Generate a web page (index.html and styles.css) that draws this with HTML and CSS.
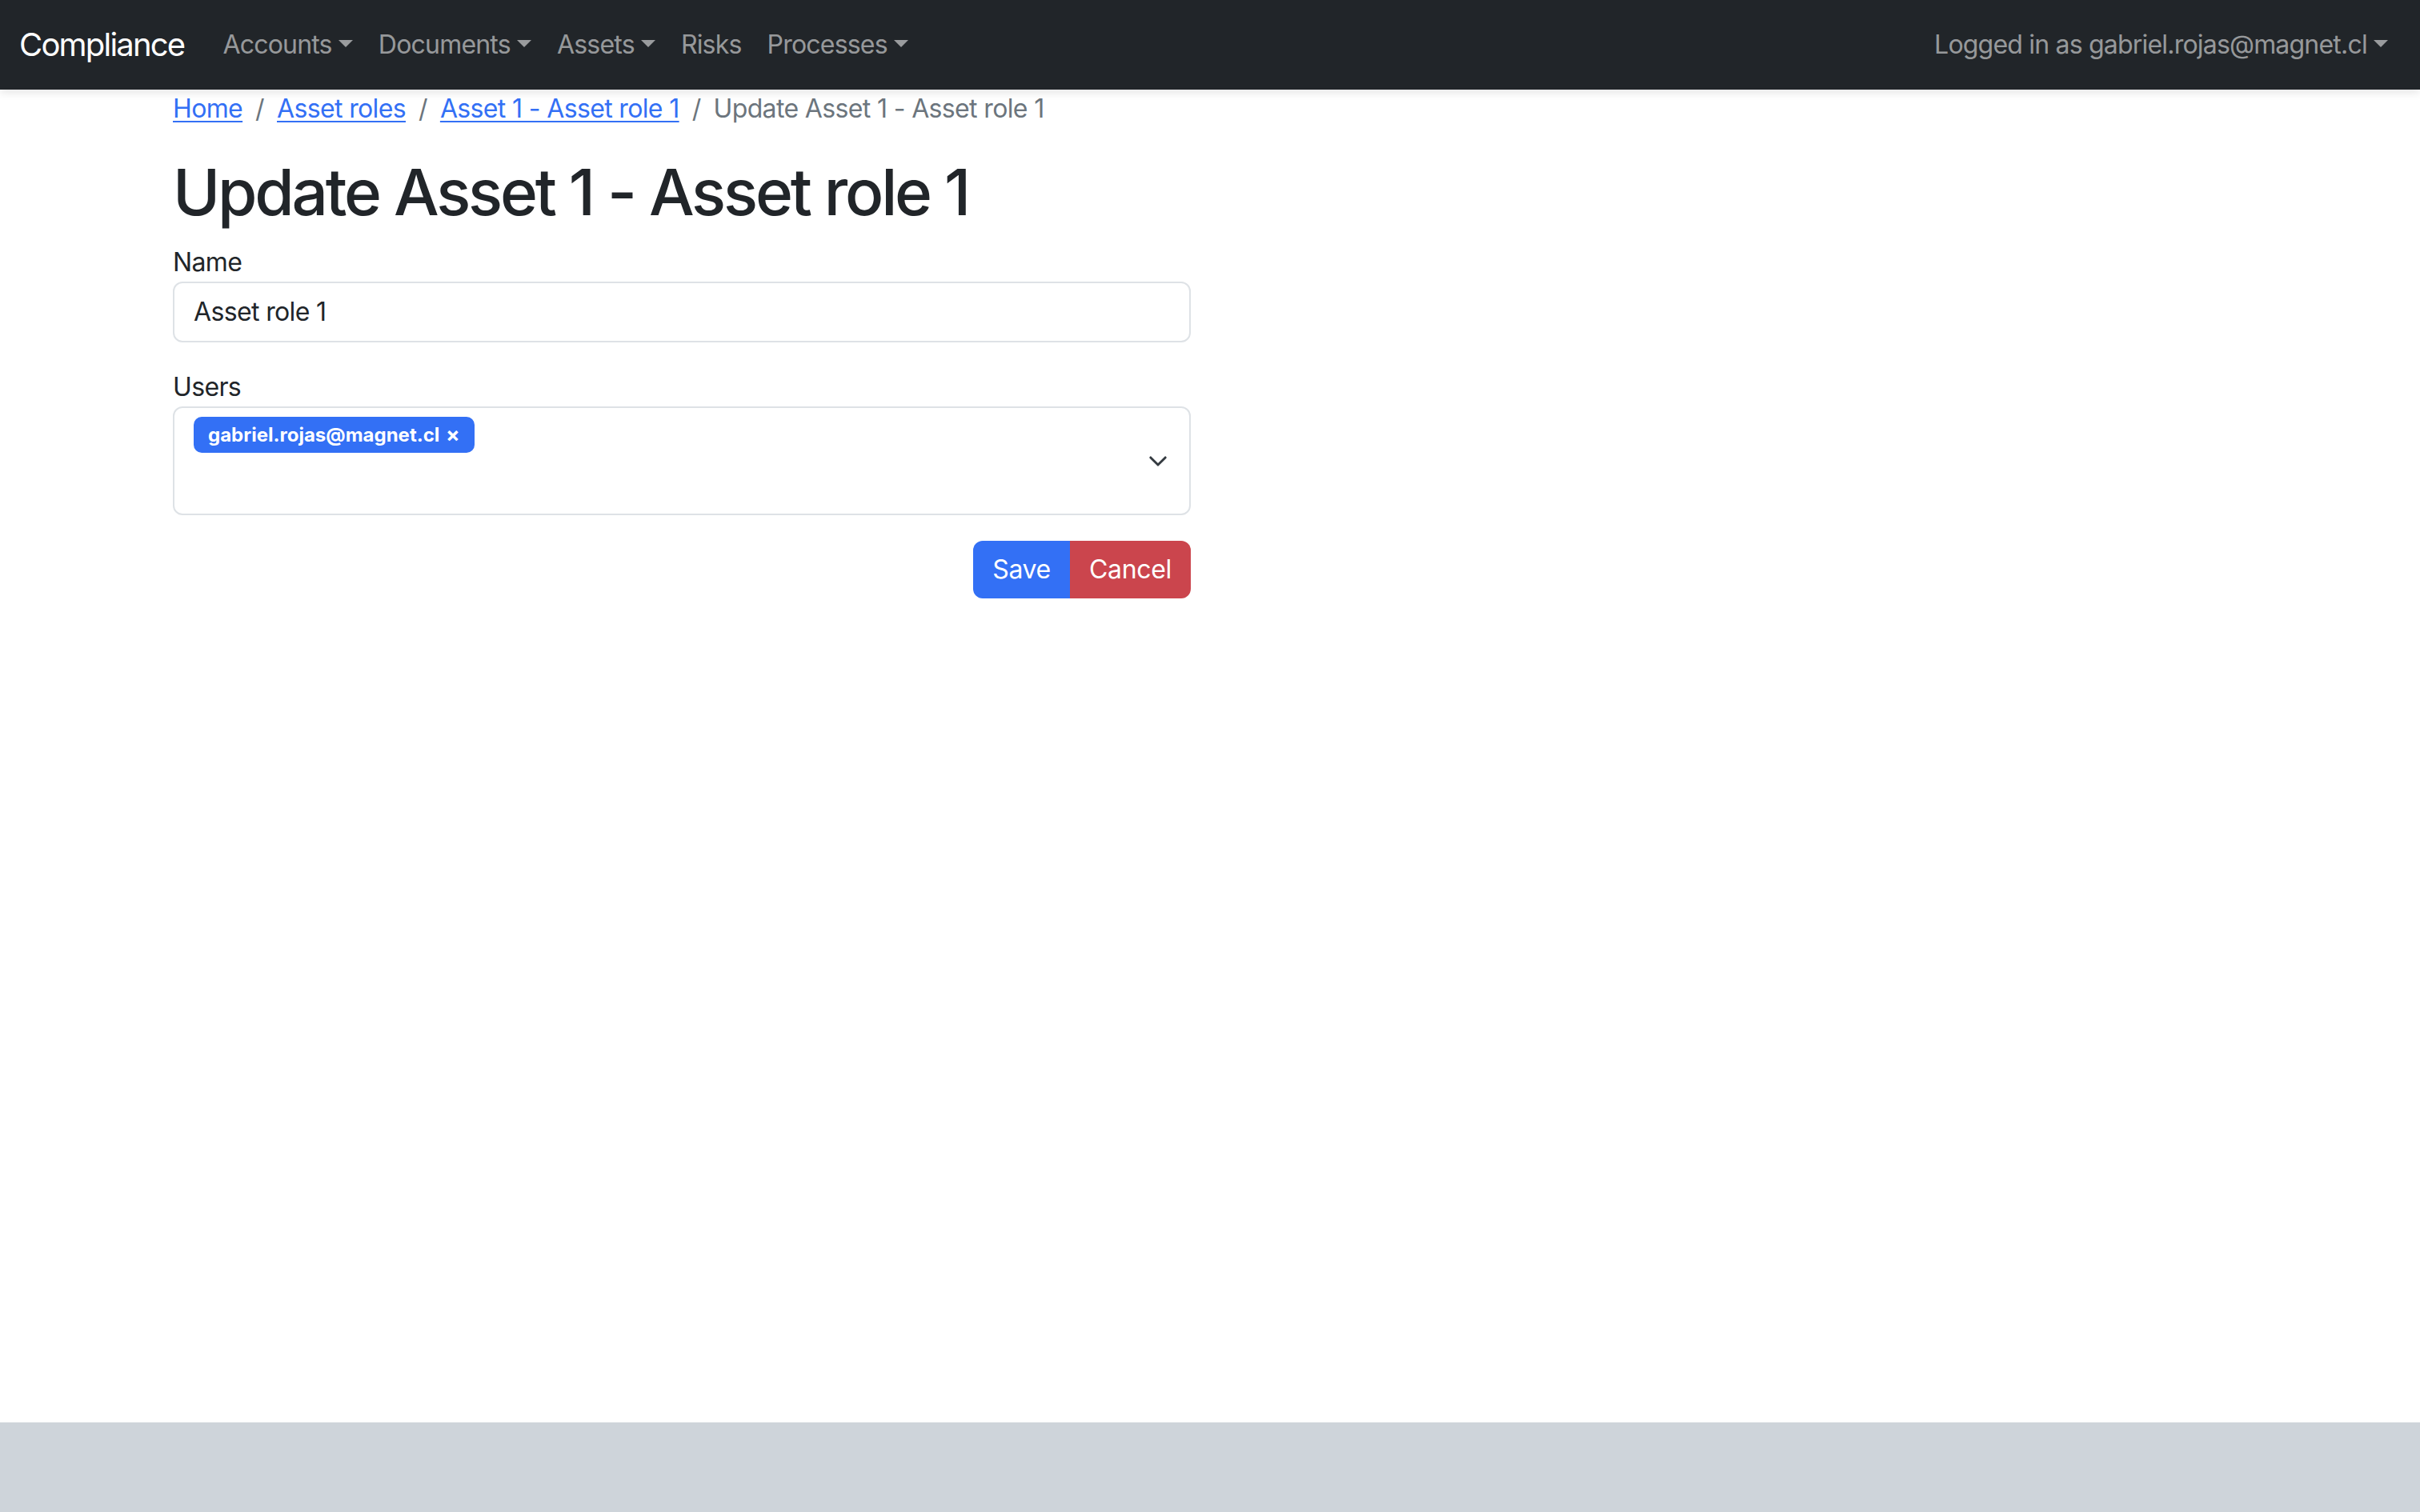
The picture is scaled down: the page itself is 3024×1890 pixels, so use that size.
FILE: index.html
```html
<!DOCTYPE html>
<html lang="en">
<head>
<meta charset="utf-8">
<title>Update Asset 1 - Asset role 1</title>
<link rel="stylesheet" href="styles.css">
</head>
<body>
<nav class="navbar">
  <div class="navbar-inner">
    <a class="brand" href="#">Compliance</a>
    <ul class="nav">
      <li><a class="nav-link dropdown" href="#">Accounts</a></li>
      <li><a class="nav-link dropdown" href="#">Documents</a></li>
      <li><a class="nav-link dropdown" href="#">Assets</a></li>
      <li><a class="nav-link" href="#">Risks</a></li>
      <li><a class="nav-link dropdown" href="#">Processes</a></li>
    </ul>
    <ul class="nav nav-right">
      <li><a class="nav-link dropdown" href="#">Logged in as gabriel.rojas@magnet.cl</a></li>
    </ul>
  </div>
</nav>
<main class="main">
  <div class="container">
    <ol class="breadcrumb">
      <li class="crumb"><a href="#">Home</a></li>
      <li class="crumb"><a href="#">Asset roles</a></li>
      <li class="crumb"><a href="#">Asset 1 - Asset role 1</a></li>
      <li class="crumb active">Update Asset 1 - Asset role 1</li>
    </ol>
    <h1 class="title">Update Asset 1 - Asset role 1</h1>
    <div class="row">
      <form class="form">
        <div class="field">
          <label class="label" for="name">Name</label>
          <input class="input" id="name" type="text" value="Asset role 1">
        </div>
        <div class="field">
          <label class="label">Users</label>
          <div class="multiselect">
            <div class="chips">
              <span class="chip">gabriel.rojas@magnet.cl <span class="chip-x">×</span></span>
            </div>
            <svg class="chevron" width="22" height="13" viewBox="0 0 12 7" aria-hidden="true"><path d="M1 1l5 5 5-5" fill="none" stroke="#343a40" stroke-width="1.6" stroke-linecap="round" stroke-linejoin="round"/></svg>
          </div>
        </div>
        <div class="actions">
          <div class="btn-group">
            <button type="button" class="btn btn-primary">Save</button>
            <button type="button" class="btn btn-danger">Cancel</button>
          </div>
        </div>
      </form>
      <div></div>
    </div>
  </div>
</main>
<footer class="footer"></footer>
</body>
</html>
```

FILE: styles.css
```css
html {
  font-size: 32px;
}
* {
  box-sizing: border-box;
}
body {
  margin: 0;
  min-height: 100vh;
  display: flex;
  flex-direction: column;
  font-family: Inter, "Liberation Sans", sans-serif;
  font-size: 1rem;
  line-height: 1.5;
  letter-spacing: -0.02em;
  color: #212529;
  background: #fff;
}
a {
  color: #3370f5;
}
.navbar {
  background: #212529;
  padding: 0.5rem 0;
  position: relative;
  z-index: 2;
  box-shadow: 0 4px 10px rgba(0, 0, 0, 0.1);
}
.navbar-inner {
  display: flex;
  align-items: center;
  padding: 0 0.75rem;
}
.brand {
  color: #fff;
  text-decoration: none;
  font-size: 1.25rem;
  letter-spacing: -0.045em;
  padding: 0.3125rem 0;
  margin-right: 1rem;
  line-height: 1.5;
}
.nav {
  display: flex;
  list-style: none;
  margin: 0;
  padding: 0;
}
.nav-right {
  margin-left: auto;
}
.nav-link {
  display: block;
  padding: 0.5rem;
  color: rgba(255, 255, 255, 0.55);
  text-decoration: none;
  letter-spacing: -0.025em;
}
.dropdown::after {
  content: "";
  display: inline-block;
  margin-left: 0.255em;
  vertical-align: 0.255em;
  border-top: 0.3em solid;
  border-right: 0.3em solid transparent;
  border-bottom: 0;
  border-left: 0.3em solid transparent;
}
.main {
  flex: 1;
}
.container {
  max-width: 2640px;
  margin: 0 auto;
  padding: 0 0.75rem;
}
.breadcrumb {
  display: flex;
  flex-wrap: wrap;
  list-style: none;
  margin: 0 0 1rem;
  padding: 0;
}
.crumb + .crumb {
  padding-left: 0.5rem;
}
.crumb + .crumb::before {
  content: "/";
  float: left;
  padding-right: 0.5rem;
  color: #6c757d;
}
.crumb a {
  text-decoration-thickness: 2px;
  text-underline-offset: 4px;
}
.crumb.active {
  color: #6c757d;
}
.title {
  font-size: 2.5rem;
  font-weight: 500;
  line-height: 1.2;
  letter-spacing: -0.04em;
  margin: 0 0 0.5rem;
}
.row {
  display: grid;
  grid-template-columns: 1fr 1fr;
  column-gap: 1.5rem;
}
.field {
  margin-bottom: 1rem;
}
.label {
  display: inline-block;
}
.input {
  display: block;
  width: 100%;
  padding: 0.375rem 0.75rem;
  font-family: inherit;
  font-size: 1rem;
  line-height: 1.5;
  letter-spacing: -0.02em;
  color: #212529;
  background: #fff;
  border: 2px solid #dee2e6;
  border-radius: 12px;
}
.multiselect {
  display: flex;
  align-items: flex-start;
  height: 136px;
  padding: 11px 0 0 0.75rem;
  border: 2px solid #dee2e6;
  border-radius: 12px;
  background: #fff;
}
.chips {
  flex: 1;
  display: flex;
  flex-wrap: wrap;
}
.chip {
  display: inline-flex;
  align-items: center;
  height: 45px;
  padding: 0 18px;
  background: #3370f5;
  color: #fff;
  font-size: 24px;
  font-weight: 700;
  letter-spacing: 0;
  line-height: 1;
  border-radius: 10px;
  white-space: pre;
}
.chip-x {
  margin-left: 2px;
  font-size: 26px;
}
.chevron {
  align-self: center;
  margin: 0 28px 11px 0;
}
.actions {
  display: flex;
  justify-content: flex-end;
}
.btn-group {
  display: inline-flex;
}
.btn {
  font-family: inherit;
  font-size: 1rem;
  line-height: 1.5;
  letter-spacing: -0.01em;
  padding: 0.375rem 0.75rem;
  border: 0;
  color: #fff;
  cursor: pointer;
}
.btn-primary {
  background: #3370f5;
  border-radius: 12px 0 0 12px;
}
.btn-danger {
  background: #cb454d;
  border-radius: 0 12px 12px 0;
}
.footer {
  height: 112px;
  background: #ced4da;
}
```
